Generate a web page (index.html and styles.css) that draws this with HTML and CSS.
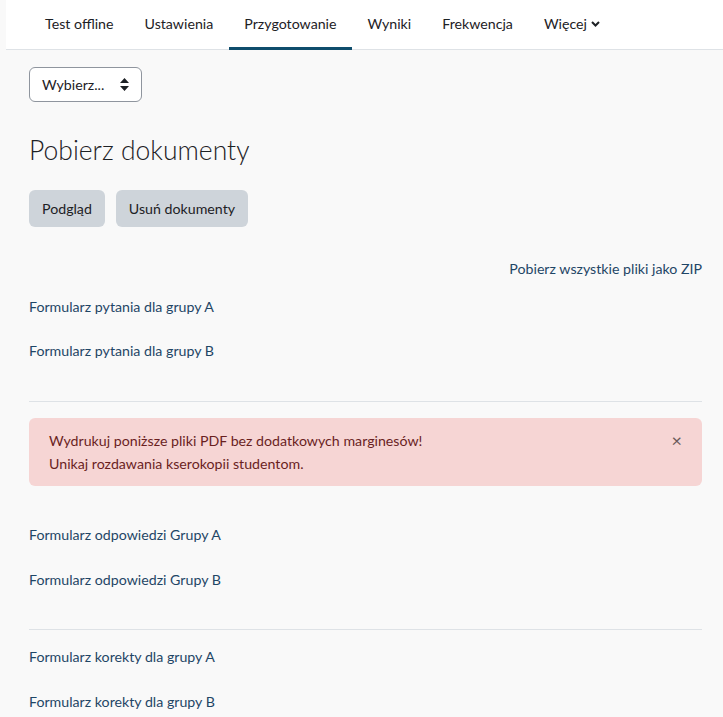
FILE: index.html
```html
<!DOCTYPE html>
<html lang="pl">
<head>
<meta charset="UTF-8">
<title>Pobierz dokumenty</title>
<link rel="stylesheet" href="styles.css">
</head>
<body>

<nav class="tabs">
  <a class="tab" href="#">Test offline</a>
  <a class="tab" href="#">Ustawienia</a>
  <a class="tab active" href="#">Przygotowanie</a>
  <a class="tab" href="#">Wyniki</a>
  <a class="tab" href="#">Frekwencja</a>
  <a class="tab" href="#">Więcej <svg class="chev" width="9" height="6" viewBox="0 0 9 6"><path d="M1 1l3.5 3.5L8 1" fill="none" stroke="#1d2125" stroke-width="2"/></svg></a>
</nav>

<div class="main">
  <div class="select">
    <span>Wybierz...</span>
    <svg width="9" height="13" viewBox="0 0 9 13"><path d="M4.5 0L9 5H0z M4.5 13L0 8h9z" fill="#1d2125"/></svg>
  </div>

  <h2 class="title">Pobierz dokumenty</h2>

  <div class="buttons">
    <button class="btn">Podgląd</button>
    <button class="btn">Usuń dokumenty</button>
  </div>

  <div class="zip"><a href="#">Pobierz wszystkie pliki jako ZIP</a></div>

  <div class="files first">
    <a href="#">Formularz pytania dla grupy A</a>
    <a href="#">Formularz pytania dla grupy B</a>
  </div>

  <hr class="sep sep-top">

  <div class="alert">
    <div class="alert-text">
      Wydrukuj poniższe pliki PDF bez dodatkowych marginesów!<br>
      Unikaj rozdawania kserokopii studentom.
    </div>
    <span class="close">&times;</span>
  </div>

  <div class="files second">
    <a href="#">Formularz odpowiedzi Grupy A</a>
    <a href="#">Formularz odpowiedzi Grupy B</a>
  </div>

  <hr class="sep">

  <div class="files third">
    <a href="#">Formularz korekty dla grupy A</a>
    <a href="#">Formularz korekty dla grupy B</a>
  </div>
</div>

</body>
</html>
```

FILE: styles.css
```css
body {
  margin: 0;
  background: #f9f9f9;
  font-family: Lato, "Open Sans", sans-serif;
  font-size: 14.2px;
  color: #1d2125;
}
a {
  text-decoration: none;
}
.tabs {
  display: flex;
  margin-left: 6px;
  padding-left: 23px;
  height: 49px;
  background: #fff;
  border-bottom: 1px solid #dee2e6;
}
.tab {
  display: flex;
  align-items: center;
  padding: 0 15.5px;
  color: #1d2125;
  border-bottom: 3px solid transparent;
  margin-bottom: -1px;
}
.tab:first-child {
  padding-left: 16px;
}
.tab.active {
  border-bottom-color: #0f4d6c;
}
.chev {
  margin-left: 4px;
}
.main {
  padding: 17px 21px 0 29px;
}
.select {
  display: inline-flex;
  align-items: center;
  justify-content: space-between;
  box-sizing: border-box;
  width: 113px;
  height: 35px;
  padding: 0 12px;
  border: 1px solid #8f959e;
  border-radius: 6px;
  background: #fff;
}
.title {
  margin: 32px 0 0;
  font-size: 26.5px;
  font-weight: 300;
  line-height: 32px;
}
.buttons {
  display: flex;
  gap: 11px;
  margin-top: 24px;
}
.btn {
  height: 37px;
  padding: 0 13px;
  border: 0;
  border-radius: 6px;
  background: #ced4da;
  color: #1d2125;
  font-family: inherit;
  font-size: inherit;
}
.zip {
  text-align: right;
  margin-top: 31px;
  line-height: 22px;
}
.zip a,
.files a {
  color: #1f4666;
}
.files {
  display: flex;
  flex-direction: column;
  gap: 23px;
  line-height: 22px;
}
.files.first {
  gap: 22px;
  margin-top: 16px;
}
.files.second {
  margin-top: 38px;
}
.files.third {
  margin-top: 16px;
}
.sep {
  margin: 38px 0 0;
  border: 0;
  border-top: 1px solid #dee2e6;
}
.sep.sep-top {
  margin-top: 39px;
}
.alert {
  display: flex;
  justify-content: space-between;
  margin-top: 16px;
  padding: 11px 20px;
  border-radius: 6px;
  background: #f6d5d4;
  color: #6a1f1f;
  line-height: 23px;
}
.close {
  font-size: 18px;
  color: #6a5a5a;
}
```
